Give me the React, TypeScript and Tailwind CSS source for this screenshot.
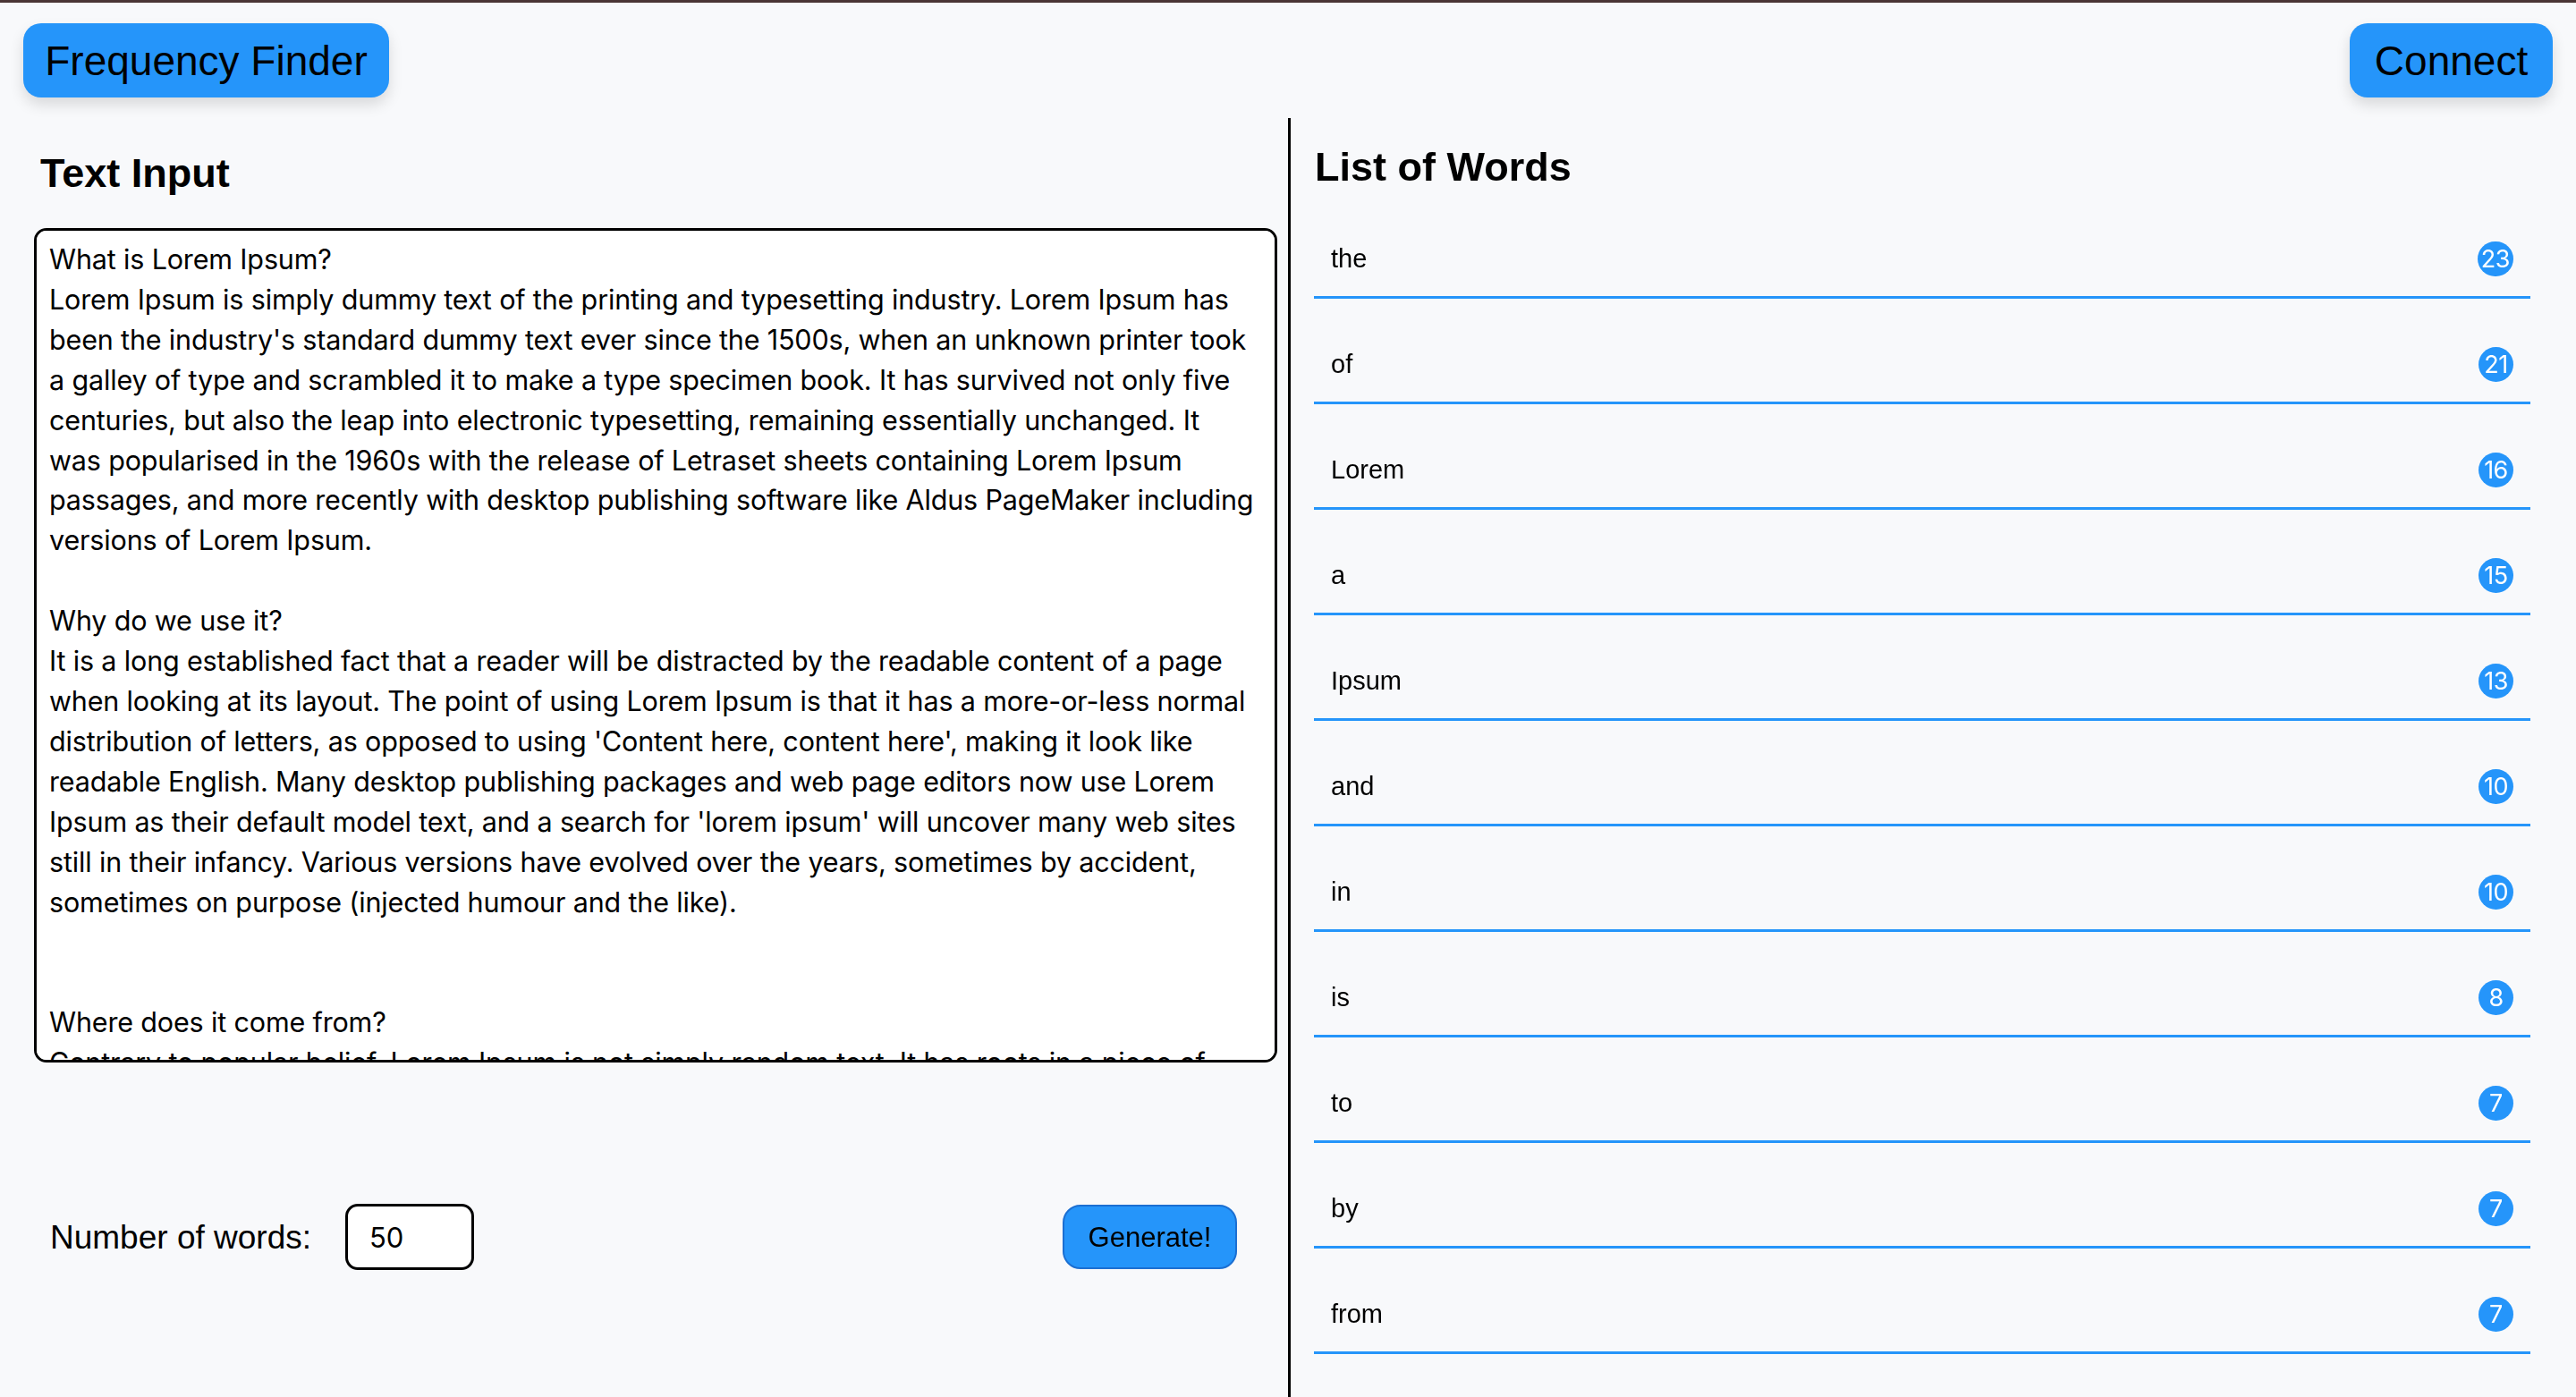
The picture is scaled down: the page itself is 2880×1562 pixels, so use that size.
import React from "react";

const TEXT = `What is Lorem Ipsum?
Lorem Ipsum is simply dummy text of the printing and typesetting industry. Lorem Ipsum has been the industry's standard dummy text ever since the 1500s, when an unknown printer took a galley of type and scrambled it to make a type specimen book. It has survived not only five centuries, but also the leap into electronic typesetting, remaining essentially unchanged. It
was popularised in the 1960s with the release of Letraset sheets containing Lorem Ipsum passages, and more recently with desktop publishing software like Aldus PageMaker including versions of Lorem Ipsum.

Why do we use it?
It is a long established fact that a reader will be distracted by the readable content of a page when looking at its layout. The point of using Lorem Ipsum is that it has a more-or-less normal distribution of letters, as opposed to using 'Content here, content here', making it look like readable English. Many desktop publishing packages and web page editors now use Lorem Ipsum as their default model text, and a search for 'lorem ipsum' will uncover many web sites still in their infancy. Various versions have evolved over the years, sometimes by accident, sometimes on purpose (injected humour and the like).


Where does it come from?
Contrary to popular belief, Lorem Ipsum is not simply random text. It has roots in a piece of classical Latin literature from 45 BC, making it over 2000 years old. Richard McClintock, a Latin professor at Hampden-Sydney College in Virginia, looked up one of the more obscure Latin words, consectetur, from a Lorem Ipsum passage, and going through the cites of the word in classical literature, discovered the undoubtable source.`;

const WORDS: [string, number][] = [
  ["the", 23],
  ["of", 21],
  ["Lorem", 16],
  ["a", 15],
  ["Ipsum", 13],
  ["and", 10],
  ["in", 10],
  ["is", 8],
  ["to", 7],
  ["by", 7],
  ["from", 7],
];

export default function App() {
  return (
    <div className="h-screen overflow-hidden flex flex-col bg-[#f8f9fb] border-t-[3px] border-[#4a3535] font-['Liberation_Sans',Arial,sans-serif] text-black">
      <header className="flex justify-between px-[26px] pt-[23px] shrink-0">
        <button className="w-[409px] h-[83px] rounded-[20px] bg-[#2595fa] text-[46px] leading-none flex items-center justify-center shadow-[0_8px_16px_rgba(0,0,0,0.13)]">
          Frequency Finder
        </button>
        <button className="w-[227px] h-[83px] rounded-[20px] bg-[#2595fa] text-[46px] leading-none flex items-center justify-center shadow-[0_8px_16px_rgba(0,0,0,0.13)]">
          Connect
        </button>
      </header>

      <main className="flex flex-1 mt-[23px] min-h-0">
        <section className="w-[1440px] shrink-0 pl-[38px] pr-[12px] flex flex-col">
          <h2 className="ml-[7px] mt-[35px] text-[45px] leading-[53px] font-bold">Text Input</h2>
          <textarea
            className="mt-[35px] w-[1390px] h-[933px] shrink-0 bg-white border-[3px] border-black rounded-[14px] pt-[10px] px-[14px] pb-0 resize-none outline-none [scrollbar-width:none] font-['Inter',sans-serif] text-[30.5px] tracking-[-0.15px] leading-[44.9px] text-black"
            defaultValue={TEXT}
          />
          <div className="mt-[158px] flex items-center justify-between pl-[18px] pr-[45px]">
            <div className="flex items-center">
              <label className="text-[37px] leading-none">Number of words:</label>
              <input
                className="ml-[38px] w-[144px] h-[74px] bg-white border-[3px] border-black rounded-[14px] pl-[24px] font-['Inter',sans-serif] text-[31px] outline-none"
                defaultValue="50"
              />
            </div>
            <button className="w-[195px] h-[72px] rounded-[20px] bg-[#2595fa] border-2 border-[#1b6fd2] text-[31px] leading-none flex items-center justify-center">
              Generate!
            </button>
          </div>
        </section>

        <div className="w-[3px] bg-black shrink-0" />

        <section className="flex-1 pl-[26px] pr-[51px] flex flex-col">
          <h2 className="ml-[1px] mt-[28px] text-[45px] leading-[53px] font-bold">List of Words</h2>
          <ul className="mt-[3px]">
            {WORDS.map(([w, n]) => (
              <li
                key={w}
                className="flex items-center justify-between pl-[19px] pr-[19px] pt-[53px] pb-[22px] border-b-[3px] border-[#2595fa]"
              >
                <span className="text-[29px] leading-[40px]">{w}</span>
                <span className="min-w-[39px] h-[39px] px-[4px] rounded-full bg-[#2595fa] text-white font-['Inter',sans-serif] text-[27px] leading-none flex items-center justify-center tracking-[-0.5px]">
                  {n}
                </span>
              </li>
            ))}
          </ul>
        </section>
      </main>
    </div>
  );
}
